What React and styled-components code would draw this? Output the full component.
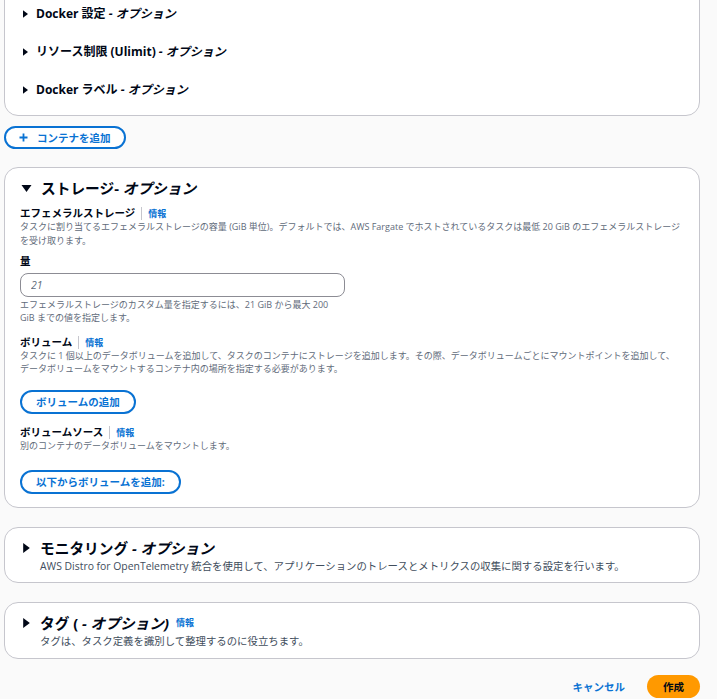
import React from "react";
import styled, { createGlobalStyle } from "styled-components";

const GlobalStyle = createGlobalStyle`
  html, body {
    margin: 0;
    padding: 0;
    background: #fafafa;
  }
  body {
    font-family: "Open Sans", "Noto Sans CJK JP", sans-serif;
    color: #000716;
    overflow: hidden;
  }
  * { box-sizing: border-box; }
`;

const Page = styled.div`
  width: 717px;
  padding: 0 17px 0 4px;
  display: flex;
  flex-direction: column;
`;

const Panel = styled.section`
  background: #ffffff;
  border: 1px solid #c6c6cd;
  border-radius: 14px;
  padding: ${(p) => p.$pad || "0"};
  margin-top: ${(p) => p.$mt || 0}px;
  display: flex;
  flex-direction: column;
`;

const SubRow = styled.div`
  display: flex;
  align-items: center;
  gap: 8px;
  height: 38px;
  font-size: 12px;
  font-weight: 700;
  line-height: 18px;
  padding-top: 1px;
`;

const Italic = styled.em`
  font-style: italic;
`;

const Caret = ({ size = 5, down = false }) =>
  down ? (
    <svg width={size + 4} height={size} viewBox="0 0 10 7" style={{ flex: "none" }}>
      <polygon points="0,0 10,0 5,7" fill="#000716" />
    </svg>
  ) : (
    <svg width={size} height={size + 3} viewBox="0 0 6 9" style={{ flex: "none" }}>
      <polygon points="0,0 6,4.5 0,9" fill="#000716" />
    </svg>
  );

const OutlineButton = styled.button`
  align-self: flex-start;
  display: inline-flex;
  align-items: center;
  gap: 9px;
  height: ${(p) => p.$h || 24}px;
  margin-top: ${(p) => p.$mt || 0}px;
  padding: 0 ${(p) => p.$pr || 14}px 0 ${(p) => p.$pl || 14}px;
  border: 2px solid #0972d3;
  border-radius: 20px;
  background: #ffffff;
  color: #0972d3;
  font-family: inherit;
  font-size: 10.5px;
  font-weight: 700;
  line-height: 14px;
  cursor: pointer;
`;

const Heading = styled.div`
  display: flex;
  align-items: center;
  gap: ${(p) => p.$gap || 9}px;
  font-size: 14.7px;
  font-weight: 700;
  line-height: ${(p) => p.$lh || 22}px;
  padding-left: ${(p) => p.$pl || 0}px;
`;

const Label = styled.div`
  display: flex;
  align-items: center;
  margin-top: ${(p) => p.$mt || 0}px;
  font-size: 10.5px;
  font-weight: 700;
  line-height: 13px;
`;

const Sep = styled.span`
  width: 1px;
  height: 13px;
  background: #c6c6cd;
  margin: 0 6px 0 6px;
`;

const InfoLink = styled.a`
  color: #0972d3;
  font-size: 9px;
  font-weight: 700;
  text-decoration: none;
  margin-left: ${(p) => p.$ml || 0}px;
`;

const Desc = styled.div`
  font-size: 9px;
  line-height: ${(p) => p.$lh || 13}px;
  color: #5f6b7a;
  margin-top: ${(p) => p.$mt || 0}px;
  max-width: ${(p) => p.$mw || "none"};
`;

const Input = styled.input`
  margin-top: 5px;
  width: 325px;
  height: 24px;
  border: 1px solid #8c8c94;
  border-radius: 8px;
  padding: 0 10px;
  font-family: inherit;
  font-size: 10.5px;
  background: #ffffff;
  &::placeholder {
    color: #5f6b7a;
    font-style: italic;
  }
`;

const SectionDesc = styled.div`
  font-size: 10.4px;
  line-height: 14px;
  color: #414d5c;
  padding-left: 17px;
  margin-top: 1px;
`;

const Footer = styled.div`
  display: flex;
  justify-content: flex-end;
  align-items: center;
  margin-top: 16px;
  gap: 14px;
`;

const LinkButton = styled.button`
  border: none;
  background: none;
  color: #0972d3;
  font-family: inherit;
  font-size: 10.5px;
  font-weight: 700;
  padding: 0 8px;
  height: 23px;
  cursor: pointer;
`;

const PrimaryButton = styled.button`
  height: 23px;
  padding: 0 16px;
  border: none;
  border-radius: 20px;
  background: #ff9900;
  color: #000716;
  font-family: inherit;
  font-size: 10.5px;
  font-weight: 700;
  cursor: pointer;
`;

const PlusIcon = () => (
  <svg width="9" height="9" viewBox="0 0 9 9" style={{ flex: "none" }}>
    <path d="M4.5 0.5v8M0.5 4.5h8" stroke="#0972d3" strokeWidth="1.8" fill="none" />
  </svg>
);

export default function App() {
  return (
    <>
      <GlobalStyle />
      <Page>
        <Panel $pad="9px 18px 7px" $mt={-16}>
          <SubRow>
            <Caret />
            <span>
              Docker 設定 <Italic>- オプション</Italic>
            </span>
          </SubRow>
          <SubRow>
            <Caret />
            <span>
              リソース制限 (Ulimit) <Italic>- オプション</Italic>
            </span>
          </SubRow>
          <SubRow>
            <Caret />
            <span>
              Docker ラベル <Italic>- オプション</Italic>
            </span>
          </SubRow>
        </Panel>

        <OutlineButton $mt={10} $h={23} $pl={13} $pr={13}>
          <PlusIcon />
          コンテナを追加
        </OutlineButton>

        <Panel $pad="9px 15px 13px" $mt={18}>
          <Heading $pl={1}>
            <Caret size={7} down />
            <span>
              ストレージ- <Italic>オプション</Italic>
            </span>
          </Heading>

          <Label $mt={8}>
            エフェメラルストレージ
            <Sep />
            <InfoLink href="#">情報</InfoLink>
          </Label>
          <Desc $lh={14}>
            タスクに割り当てるエフェメラルストレージの容量 (GiB 単位)。デフォルトでは、AWS Fargate でホストされているタスクは最低 20 GiB のエフェメラルストレージを受け取ります。
          </Desc>

          <Label $mt={7}>量</Label>
          <Input placeholder="21" />
          <Desc $mt={1} $mw="315px">
            エフェメラルストレージのカスタム量を指定するには、21 GiB から最大 200 GiB までの値を指定します。
          </Desc>

          <Label $mt={12}>
            ボリューム
            <Sep />
            <InfoLink href="#">情報</InfoLink>
          </Label>
          <Desc>
            タスクに 1 個以上のデータボリュームを追加して、タスクのコンテナにストレージを追加します。その際、データボリュームごとにマウントポイントを追加して、
            <br />
            データボリュームをマウントするコンテナ内の場所を指定する必要があります。
          </Desc>
          <OutlineButton $mt={15}>ボリュームの追加</OutlineButton>

          <Label $mt={12}>
            ボリュームソース
            <Sep />
            <InfoLink href="#">情報</InfoLink>
          </Label>
          <Desc>別のコンテナのデータボリュームをマウントします。</Desc>
          <OutlineButton $mt={18}>以下からボリュームを追加:</OutlineButton>
        </Panel>

        <Panel $pad="10px 18px 9px" $mt={19}>
          <Heading $lh={20} $gap={10}>
            <Caret size={7} />
            <span>
              モニタリング <Italic>- オプション</Italic>
            </span>
          </Heading>
          <SectionDesc>
            AWS Distro for OpenTelemetry 統合を使用して、アプリケーションのトレースとメトリクスの収集に関する設定を行います。
          </SectionDesc>
        </Panel>

        <Panel $pad="10px 18px 10px" $mt={19}>
          <Heading $lh={20} $gap={10}>
            <Caret size={7} />
            <span>
              タグ ( <Italic>- オプション)</Italic>
            </span>
            <InfoLink href="#" $ml={-3}>情報</InfoLink>
          </Heading>
          <SectionDesc>タグは、タスク定義を識別して整理するのに役立ちます。</SectionDesc>
        </Panel>

        <Footer>
          <LinkButton>キャンセル</LinkButton>
          <PrimaryButton>作成</PrimaryButton>
        </Footer>
      </Page>
    </>
  );
}
